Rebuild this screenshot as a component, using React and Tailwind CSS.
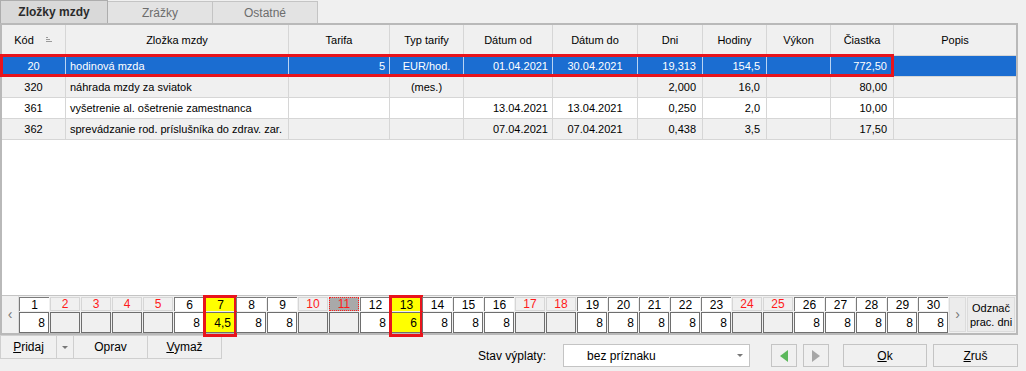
import React from 'react';

const cols = [
    { label: 'Kód', w: 'w-[64px]', align: 'justify-center' },
    { label: 'Zložka mzdy', w: 'w-[223px]', align: 'justify-start pl-[4px]' },
    { label: 'Tarifa', w: 'w-[101px]', align: 'justify-end pr-[4px]' },
    { label: 'Typ tarify', w: 'w-[74px]', align: 'justify-center' },
    { label: 'Dátum od', w: 'w-[89px]', align: 'justify-end pr-[4px]' },
    { label: 'Dátum do', w: 'w-[85px]', align: 'justify-center' },
    { label: 'Dni', w: 'w-[65px]', align: 'justify-end pr-[6px]' },
    { label: 'Hodiny', w: 'w-[64px]', align: 'justify-end pr-[6px]' },
    { label: 'Výkon', w: 'w-[64px]', align: 'justify-end pr-[6px]' },
    { label: 'Čiastka', w: 'w-[63px]', align: 'justify-end pr-[6px]' },
    { label: 'Popis', w: 'flex-1', align: 'justify-start pl-[4px]' },
];

const rows = [
    ['20', 'hodinová mzda', '5', 'EUR/hod.', '01.04.2021', '30.04.2021', '19,313', '154,5', '', '772,50', ''],
    ['320', 'náhrada mzdy za sviatok', '', '(mes.)', '', '', '2,000', '16,0', '', '80,00', ''],
    ['361', 'vyšetrenie al. ošetrenie zamestnanca', '', '', '13.04.2021', '13.04.2021', '0,250', '2,0', '', '10,00', ''],
    ['362', 'sprevádzanie rod. príslušníka do zdrav. zar.', '', '', '07.04.2021', '07.04.2021', '0,438', '3,5', '', '17,50', ''],
];

const holidays = [2, 3, 4, 5, 10, 11, 17, 18, 24, 25];
const hours = { 7: '4,5', 13: '6' };
const days = Array.from({ length: 30 }, (_, i) => i + 1);

const SortIcon = () => (
    <svg width="7" height="6" viewBox="0 0 7 6" className="ml-[12px]">
        <path d="M0 0.5h2M0 2.5h4M0 4.5h6" stroke="#9a9a9a" strokeWidth="1" />
    </svg>
);

const DayColumn = ({ day }) => {
    const off = holidays.includes(day);
    const marked = day === 7 || day === 13;
    const focused = day === 11;
    const value = off ? '' : hours[day] || '8';

    let topCls = 'bg-white border-t border-l border-[#7a7a7a] border-r-[#e8e8e8] border-b-[#e8e8e8] text-black';
    if (off) topCls = 'bg-[#f0f0f0] border border-[#d6d6d6] text-[#ff1a1a]';
    if (focused) topCls = 'bg-[#a9a9a9] border border-dotted border-[#ff1a1a] text-[#ff1a1a]';
    if (marked) topCls = 'bg-[#ffff00] border-t border-l border-[#7a7a7a] text-black';

    return (
        <div className="relative w-[31px] flex flex-col pr-[1px]">
            <div className={`h-[15px] mt-[1px] flex items-center justify-center text-[12px] leading-none ${topCls}`}>{day}</div>
            <div
                className={`h-[22px] mt-[1px] border border-[#6e6e6e] flex items-center justify-end pr-[3px] text-[12px] ${
                    marked ? 'bg-[#ffff00]' : off ? 'bg-[#f0f0f0]' : 'bg-white'
                }`}
            >
                {value}
            </div>
            {marked && (
                <div className="absolute left-[-2px] top-[-1px] w-[34px] h-[42px] border-[3px] border-[#e8141c]" />
            )}
        </div>
    );
};

const App = () => {
    return (
        <div className="w-[1026px] h-[371px] bg-[#f0f0f0] flex flex-col text-[11px] text-black" style={{ fontFamily: '"Liberation Sans", Arial, sans-serif' }}>
            {/* Tabs */}
            <div className="h-[23px] flex items-end">
                <div className="w-[108px] h-[23px] bg-[#d9d9d9] border border-b-0 border-[#adadad] flex items-center justify-center font-bold text-[12px] text-[#2b2b2b]">
                    Zložky mzdy
                </div>
                <div className="w-[105px] h-[22px] bg-[#e3e3e3] border-t border-r border-[#c4c4c4] flex items-center justify-center text-[12px] text-[#6d6d6d]">
                    Zrážky
                </div>
                <div className="w-[105px] h-[22px] bg-[#e3e3e3] border-t border-r border-[#c4c4c4] flex items-center justify-center text-[12px] text-[#6d6d6d]">
                    Ostatné
                </div>
            </div>

            {/* Grid frame */}
            <div className="w-[1018px] h-[312px] border-2 border-[#b9b9b9] flex flex-col">
                {/* Header */}
                <div className="h-[31px] flex border-b border-[#d6d6d6] bg-[#f0f0f0]">
                    {cols.map((c, i) => (
                        <div
                            key={c.label}
                            className={`${c.w} flex items-center justify-center ${i < cols.length - 1 ? 'border-r border-[#d6d6d6]' : ''}`}
                        >
                            {c.label}
                            {i === 0 && <SortIcon />}
                        </div>
                    ))}
                </div>

                {/* Body */}
                <div className="relative flex-1 bg-white">
                    {rows.map((r, ri) => {
                        const sel = ri === 0;
                        const rowBg = sel ? 'bg-[#1b6dd1] text-white' : ri % 2 === 1 ? 'bg-[#f0f0f0]' : 'bg-white';
                        return (
                            <div key={ri} className={`h-[21px] flex border-b border-[#d6d6d6] ${rowBg}`}>
                                {cols.map((c, ci) => (
                                    <div
                                        key={ci}
                                        className={`${c.w} flex items-center ${c.align} ${
                                            ci < cols.length - 1 ? (sel ? 'border-r border-[#b9d3f2]' : 'border-r border-[#d6d6d6]') : ''
                                        }`}
                                    >
                                        {r[ci]}
                                    </div>
                                ))}
                            </div>
                        );
                    })}
                    {/* selection highlight */}
                    <div className="absolute left-[-2px] top-[-2px] w-[894px] h-[23px] border-[3px] border-[#e8141c]" />
                </div>

                {/* Day strip */}
                <div className="h-[38px] flex border-t border-[#c4c4c4] bg-[#f0f0f0]">
                    <div className="w-[17px] flex items-center justify-center text-[#777] text-[14px] border-r border-[#dcdcdc]">‹</div>
                    {days.map((d) => (
                        <DayColumn key={d} day={d} />
                    ))}
                    <div className="w-[17px] mt-[1px] mb-[1px] bg-[#ececec] border border-[#dcdcdc] flex items-center justify-center text-[#777] text-[14px]">›</div>
                    <div className="w-[48px] ml-[1px] mt-[1px] mb-[1px] bg-[#ececec] border border-[#dcdcdc] flex items-center justify-center text-center text-[11px] leading-[14px]">
                        Odznač<br />prac. dni
                    </div>
                </div>
            </div>

            {/* Bottom bar */}
            <div className="flex items-start">
                <div className="flex h-[24px]">
                    <div className="w-[57px] border border-[#cfcfcf] flex items-center justify-center text-[12px]">
                        <span><span className="underline">P</span>ridaj</span>
                    </div>
                    <div className="w-[17px] border border-l-0 border-[#cfcfcf] flex items-center justify-center">
                        <svg width="6" height="3" viewBox="0 0 6 3"><path d="M0 0h6L3 3z" fill="#777" /></svg>
                    </div>
                    <div className="w-[74px] border border-l-0 border-[#cfcfcf] flex items-center justify-center text-[12px]">Oprav</div>
                    <div className="w-[74px] border border-l-0 border-[#cfcfcf] flex items-center justify-center text-[12px]">
                        <span><span className="underline">V</span>ymaž</span>
                    </div>
                </div>

                <div className="ml-[256px] mt-[9px] h-[23px] flex items-center text-[12px]">Stav výplaty:</div>
                <div className="ml-[17px] mt-[9px] w-[187px] h-[23px] bg-white border border-[#c4c4c4] flex items-center justify-between pl-[23px] pr-[6px] text-[12px]">
                    bez príznaku
                    <svg width="6" height="3" viewBox="0 0 6 3"><path d="M0 0h6L3 3z" fill="#777" /></svg>
                </div>

                <div className="ml-[21px] mt-[9px] w-[26px] h-[23px] border border-[#c4c4c4] flex items-center justify-center">
                    <svg width="8" height="12" viewBox="0 0 8 12"><path d="M8 0v12L0 6z" fill="#5cb85c" /></svg>
                </div>
                <div className="ml-[6px] mt-[9px] w-[26px] h-[23px] border border-[#c4c4c4] flex items-center justify-center">
                    <svg width="8" height="12" viewBox="0 0 8 12"><path d="M0 0v12L8 6z" fill="#a6a6a6" /></svg>
                </div>

                <div className="ml-[14px] mt-[9px] w-[84px] h-[23px] border border-[#c4c4c4] flex items-center justify-center text-[12px]">
                    <span><span className="underline">O</span>k</span>
                </div>
                <div className="ml-[6px] mt-[9px] w-[85px] h-[23px] border border-[#c4c4c4] flex items-center justify-center text-[12px]">
                    <span><span className="underline">Z</span>ruš</span>
                </div>
            </div>
        </div>
    );
};

export default App;
